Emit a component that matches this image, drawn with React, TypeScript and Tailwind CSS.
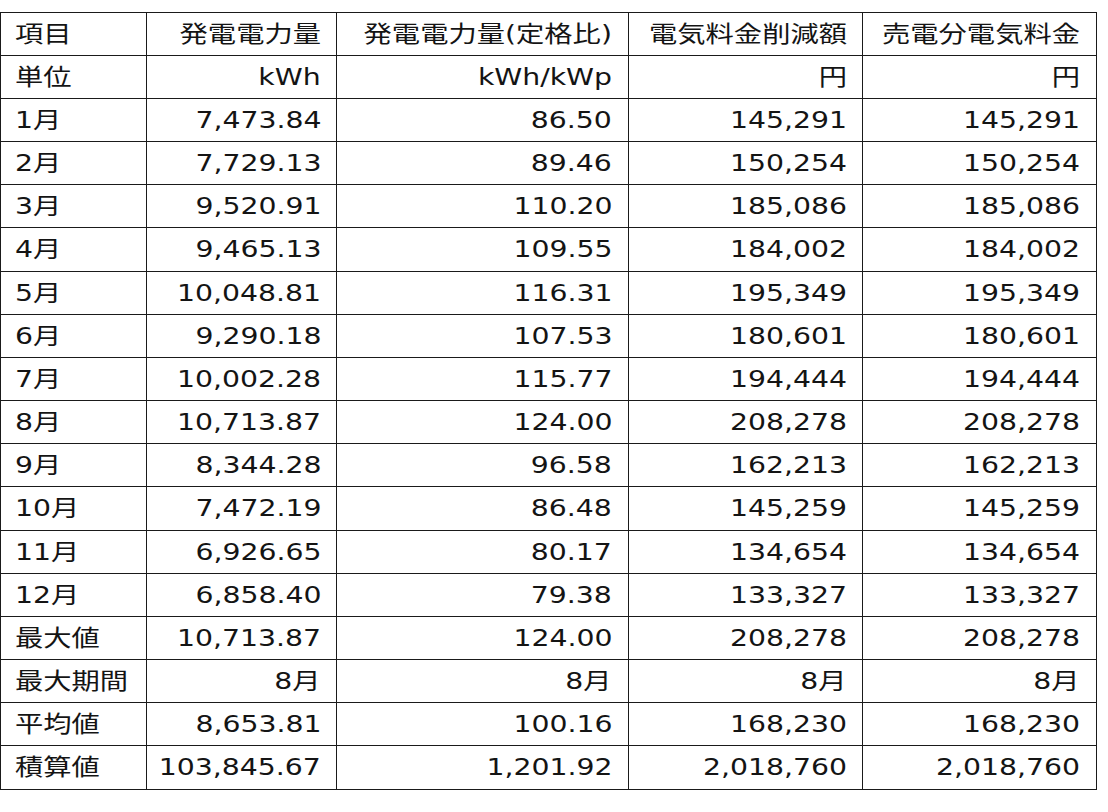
import React from "react";

const rows: string[][] = [
  ["項目", "発電電力量", "発電電力量(定格比)", "電気料金削減額", "売電分電気料金"],
  ["単位", "kWh", "kWh/kWp", "円", "円"],
  ["1月", "7,473.84", "86.50", "145,291", "145,291"],
  ["2月", "7,729.13", "89.46", "150,254", "150,254"],
  ["3月", "9,520.91", "110.20", "185,086", "185,086"],
  ["4月", "9,465.13", "109.55", "184,002", "184,002"],
  ["5月", "10,048.81", "116.31", "195,349", "195,349"],
  ["6月", "9,290.18", "107.53", "180,601", "180,601"],
  ["7月", "10,002.28", "115.77", "194,444", "194,444"],
  ["8月", "10,713.87", "124.00", "208,278", "208,278"],
  ["9月", "8,344.28", "96.58", "162,213", "162,213"],
  ["10月", "7,472.19", "86.48", "145,259", "145,259"],
  ["11月", "6,926.65", "80.17", "134,654", "134,654"],
  ["12月", "6,858.40", "79.38", "133,327", "133,327"],
  ["最大値", "10,713.87", "124.00", "208,278", "208,278"],
  ["最大期間", "8月", "8月", "8月", "8月"],
  ["平均値", "8,653.81", "100.16", "168,230", "168,230"],
  ["積算値", "103,845.67", "1,201.92", "2,018,760", "2,018,760"],
];

const padClasses = ["pl-[14px] justify-start", "pr-[15px] justify-end", "pr-[16px] justify-end", "pr-[15px] justify-end", "pr-[16px] justify-end"];

export default function App() {
  return (
    <div className="min-h-[812px] w-[1108px] bg-white pt-[12px]">
      <div
        className="grid w-[1097px] gap-px bg-[#1a1a1a] p-px grid-cols-[145px_189px_291px_233px_233px] grid-rows-[repeat(5,42px)_43px_repeat(5,42px)_43px_repeat(5,42px)_43px] text-[23px] leading-none text-[#141414]"
        style={{ fontFamily: '"DejaVu Sans", "Noto Sans CJK JP", sans-serif' }}
      >
        {rows.map((r, ri) =>
          r.map((c, ci) => (
            <div key={ri + "-" + ci} className={"flex items-center bg-white whitespace-nowrap " + padClasses[ci]}>
              <span className={"inline-block scale-x-[1.23] " + (ci === 0 ? "origin-left" : "origin-right")}>{c}</span>
            </div>
          ))
        )}
      </div>
    </div>
  );
}
